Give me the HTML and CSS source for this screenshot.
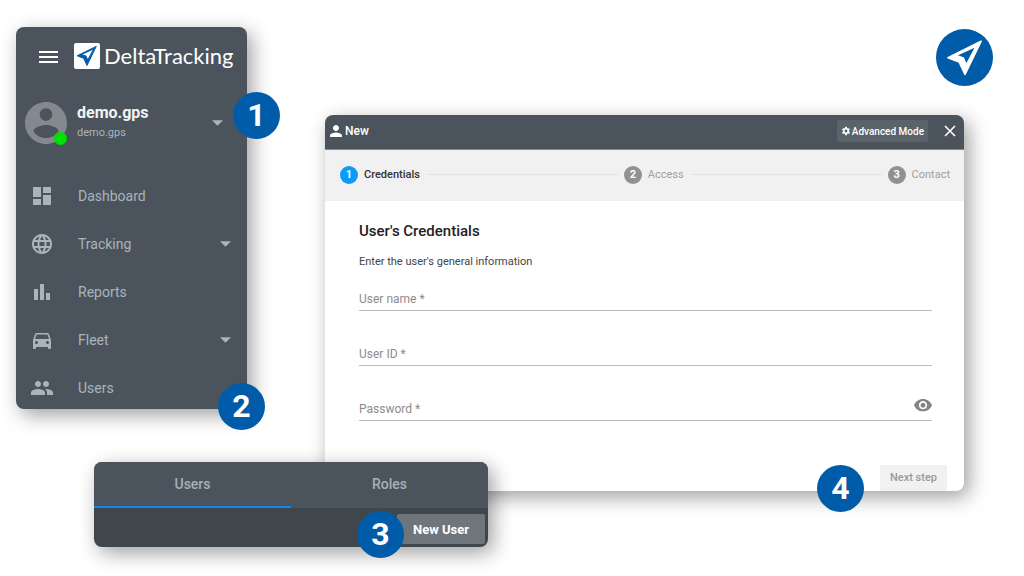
FILE: index.html
```html
<!DOCTYPE html>
<html lang="en">
<head>
  <meta charset="UTF-8">
  <meta name="viewport" content="width=device-width, initial-scale=1.0">
  <title>DeltaTracking - New user</title>
  <link rel="stylesheet" href="styles.css">
</head>
<body>
  <svg class="sprite" aria-hidden="true">
    <symbol id="arrow" viewBox="22 35 116 114">
      <path fill="currentColor" stroke="currentColor" stroke-width="5" stroke-linejoin="round" fill-rule="evenodd" d="M129 41 L28 91 L62 104 L80 142 Z M115 55 L84 113 L75 92 L51 84 Z"/>
    </symbol>
    <symbol id="caret" viewBox="0 0 10 5">
      <path fill="currentColor" d="M0 0h10L5 5z"/>
    </symbol>
  </svg>
  <main class="page">
    <aside class="sidebar card">
      <div class="sidebar-head">
        <button class="icon-btn" type="button" aria-label="Menu">
          <svg width="24" height="24" viewBox="0 0 24 24"><path fill="currentColor" d="M3 19h19v-2H3v2zm0-5h19v-2H3v2zm0-7v2h19V7H3z"/></svg>
        </button>
        <a class="brand" href="#">
          <span class="brand-mark"><svg width="22" height="22"><use href="#arrow"/></svg></span>
          <span class="brand-name">DeltaTracking</span>
        </a>
      </div>
      <div class="account">
        <div class="avatar">
          <svg width="42" height="42" viewBox="2 2 20 20"><path fill="currentColor" d="M12 2C6.480 2 2 6.480 2 12s4.480 10 10 10 10-4.480 10-10S17.520 2 12 2zm0 3c1.660 0 3 1.340 3 3s-1.340 3-3 3-3-1.340-3-3 1.340-3 3-3zm0 14.200c-2.500 0-4.710-1.280-6-3.220.030-1.990 4-3.080 6-3.080 1.990 0 5.970 1.090 6 3.080-1.290 1.940-3.500 3.220-6 3.220z"/></svg>
          <span class="status"></span>
        </div>
        <div class="account-text">
          <strong>demo.gps</strong>
          <span>demo.gps</span>
        </div>
        <button class="icon-btn account-toggle" type="button" aria-label="Account options">
          <svg class="caret"><use href="#caret"/></svg>
        </button>
      </div>
      <nav class="menu">
        <a href="#">
          <svg width="24" height="24" viewBox="0 0 24 24"><path fill="currentColor" d="M3 13h8V3H3v10zm0 8h8v-6H3v6zm10 0h8V11h-8v10zm0-18v6h8V3h-8z"/></svg>
          <span>Dashboard</span>
        </a>
        <a href="#">
          <svg width="24" height="24" viewBox="0 0 24 24"><path fill="currentColor" d="M11.990 2C6.470 2 2 6.480 2 12s4.470 10 9.990 10C17.520 22 22 17.520 22 12S17.520 2 11.990 2zm6.930 6h-2.950c-.320-1.250-.780-2.450-1.380-3.560 1.840.630 3.370 1.910 4.330 3.560zM12 4.040c.830 1.200 1.480 2.530 1.910 3.960h-3.820c.430-1.430 1.080-2.760 1.910-3.960zM4.260 14C4.100 13.360 4 12.690 4 12s.100-1.360.260-2h3.380c-.080.660-.140 1.320-.140 2 0 .680.060 1.340.140 2H4.260zm.820 2h2.950c.320 1.250.780 2.450 1.380 3.560-1.840-.630-3.370-1.900-4.330-3.560zm2.950-8H5.080c.960-1.660 2.490-2.930 4.330-3.560C8.810 5.550 8.350 6.750 8.030 8zM12 19.960c-.830-1.200-1.480-2.530-1.910-3.960h3.820c-.430 1.430-1.080 2.760-1.910 3.960zM14.340 14H9.660c-.090-.660-.160-1.320-.160-2 0-.680.070-1.350.160-2h4.680c.090.650.160 1.320.160 2 0 .680-.070 1.340-.160 2zm.250 5.560c.600-1.110 1.060-2.310 1.380-3.560h2.950c-.960 1.650-2.490 2.930-4.330 3.560zM16.360 14c.080-.660.140-1.320.140-2 0-.680-.060-1.340-.140-2h3.380c.160.640.260 1.310.260 2s-.100 1.360-.260 2h-3.380z"/></svg>
          <span>Tracking</span>
          <svg class="caret"><use href="#caret"/></svg>
        </a>
        <a href="#">
          <svg width="24" height="24" viewBox="0 0 24 24"><path fill="currentColor" d="M4 9h4v11H4zm12 4h4v7h-4zm-6-9h4v16h-4z"/></svg>
          <span>Reports</span>
        </a>
        <a href="#">
          <svg width="24" height="24" viewBox="0 0 24 24"><path fill="currentColor" d="M18.920 6.010C18.720 5.420 18.160 5 17.500 5h-11c-.660 0-1.210.420-1.420 1.010L3 12v8c0 .550.450 1 1 1h1c.550 0 1-.450 1-1v-1h12v1c0 .550.450 1 1 1h1c.550 0 1-.450 1-1v-8l-2.080-5.990zM6.500 16c-.830 0-1.500-.670-1.500-1.500S5.670 13 6.500 13s1.500.670 1.500 1.500S7.330 16 6.500 16zm11 0c-.830 0-1.500-.670-1.500-1.500s.670-1.500 1.500-1.500 1.500.670 1.500 1.500-.670 1.500-1.500 1.500zM5 11l1.500-4.500h11L19 11H5z"/></svg>
          <span>Fleet</span>
          <svg class="caret"><use href="#caret"/></svg>
        </a>
        <a href="#">
          <svg width="24" height="24" viewBox="0 0 24 24"><path fill="currentColor" d="M16 11c1.660 0 2.990-1.340 2.990-3S17.660 5 16 5c-1.660 0-3 1.340-3 3s1.340 3 3 3zm-8 0c1.660 0 2.990-1.340 2.990-3S9.660 5 8 5C6.340 5 5 6.340 5 8s1.340 3 3 3zm0 2c-2.330 0-7 1.170-7 3.500V19h14v-2.500c0-2.330-4.670-3.500-7-3.500zm8 0c-.290 0-.620.020-.970.050 1.160.840 1.970 1.970 1.970 3.450V19h6v-2.500c0-2.330-4.670-3.500-7-3.500z"/></svg>
          <span>Users</span>
        </a>
      </nav>
      <span class="badge badge-account">1</span>
      <span class="badge badge-users">2</span>
    </aside>

    <div class="emblem"><svg width="38" height="38"><use href="#arrow"/></svg></div>

    <section class="dialog card">
      <header class="dialog-head">
        <svg width="18" height="18" viewBox="0 0 24 24"><path fill="currentColor" d="M12 12c2.210 0 4-1.790 4-4s-1.790-4-4-4-4 1.790-4 4 1.790 4 4 4zm0 2c-2.670 0-8 1.340-8 4v2h16v-2c0-2.660-5.330-4-8-4z"/></svg>
        <h1>New</h1>
        <button class="advanced" type="button">
          <svg width="10" height="10" viewBox="0 0 24 24"><path fill="currentColor" fill-rule="evenodd" d="M10 2h4l.600 3 2 1.100 2.800-1 2 3.500L19.200 10.600v2.800l2.200 2-2 3.500-2.800-1-2 1.100-.600 3h-4l-.600-3-2-1.100-2.800 1-2-3.500 2.200-2v-2.800l-2.200-2 2-3.500 2.800 1 2-1.100zM12 8.500a3.500 3.500 0 1 0 0 7 3.500 3.500 0 0 0 0-7z"/></svg>
          Advanced Mode
        </button>
        <button class="icon-btn" type="button" aria-label="Close">
          <svg width="12" height="12" viewBox="0 0 12 12"><path fill="none" stroke="currentColor" stroke-width="1.600" d="M1 1l10 10M11 1L1 11"/></svg>
        </button>
      </header>
      <ol class="steps">
        <li class="step active"><span class="step-no">1</span>Credentials</li>
        <li class="step"><span class="step-no">2</span>Access</li>
        <li class="step"><span class="step-no">3</span>Contact</li>
      </ol>
      <form class="form">
        <h2>User's Credentials</h2>
        <p>Enter the user's general information</p>
        <div class="field">
          <label for="user-name">User name *</label>
          <input id="user-name" type="text" required>
        </div>
        <div class="field">
          <label for="user-id">User ID *</label>
          <input id="user-id" type="text" required>
        </div>
        <div class="field">
          <label for="password">Password *</label>
          <input id="password" type="password" required>
          <button class="icon-btn reveal" type="button" aria-label="Show password">
            <svg width="18" height="18" viewBox="1 2 22 22"><path fill="currentColor" d="M12 4.500C7 4.500 2.730 7.610 1 12c1.730 4.390 6 7.500 11 7.500s9.270-3.110 11-7.500c-1.730-4.390-6-7.500-11-7.500zM12 17c-2.760 0-5-2.240-5-5s2.240-5 5-5 5 2.240 5 5-2.240 5-5 5zm0-8c-1.660 0-3 1.340-3 3s1.340 3 3 3 3-1.340 3-3-1.340-3-3-3z"/></svg>
          </button>
        </div>
      </form>
      <footer class="dialog-foot">
        <button class="next" type="button" disabled>Next step</button>
      </footer>
      <span class="badge badge-next">4</span>
    </section>

    <section class="tabs card">
      <div class="tab-list" role="tablist">
        <button class="tab selected" type="button" role="tab" aria-selected="true">Users</button>
        <button class="tab" type="button" role="tab" aria-selected="false">Roles</button>
      </div>
      <div class="toolbar">
        <button class="new-user" type="button">New User</button>
      </div>
      <span class="badge badge-new">3</span>
    </section>
  </main>
</body>
</html>
```
FILE: styles.css
```css
* {
  box-sizing: border-box;
}
body {
  margin: 0;
  background-color: #fff;
  font-family: Roboto, "Liberation Sans", sans-serif;
}
button {
  border: 0;
  padding: 0;
  font-family: inherit;
  color: inherit;
  background: none;
}
a {
  color: inherit;
  text-decoration: none;
}
svg {
  display: block;
  flex: none;
}
h1, h2, p, ol {
  margin: 0;
  padding: 0;
}
.sprite {
  position: absolute;
  width: 0;
  height: 0;
}

/* the tabs card slides under the dialog's bottom edge */
.page {
  display: grid;
  grid-template-columns: 231px 1fr;
  grid-template-rows: 88px auto auto;
  column-gap: 78px;
  padding: 27px 60px 28px 16px;
}
.card {
  position: relative;
  border-radius: 8px;
  box-shadow: 5px 6px 20px rgba(0, 0, 0, 0.38);
}
.icon-btn {
  display: flex;
}
.caret {
  width: 11px;
  height: 6px;
}

.badge {
  position: absolute;
  width: 47px;
  height: 47px;
  border-radius: 50%;
  background-color: #005ca8;
  color: #fff;
  font-size: 32px;
  font-weight: 700;
  line-height: 47px;
  text-align: center;
}
.badge-account {
  top: 65px;
  right: -33px;
}
.badge-users {
  right: -18px;
  bottom: -21px;
}
.badge-next {
  right: 100px;
  bottom: -21px;
}
.badge-new {
  right: 84px;
  bottom: -11px;
}

.sidebar {
  grid-row: 1 / 3;
  align-self: start;
  background-color: #4b545c;
  color: #a9b4bd;
}
.sidebar-head {
  display: flex;
  align-items: center;
  gap: 14px;
  height: 58px;
  padding-left: 20px;
  color: #fff;
}
.brand {
  display: flex;
  align-items: center;
  gap: 4px;
}
.brand-mark {
  display: grid;
  place-items: center;
  width: 26px;
  height: 26px;
  border-radius: 2px;
  background-color: #fff;
  color: #005ca8;
}
.brand-name {
  font-family: Lato, sans-serif;
  font-size: 22px;
  line-height: 26px;
}
.account {
  display: flex;
  align-items: center;
  gap: 10px;
  height: 74px;
  padding: 2px 24px 0 9px;
}
.avatar {
  position: relative;
  color: #83898e;
}
.status {
  position: absolute;
  right: 0;
  bottom: -1px;
  width: 13px;
  height: 13px;
  border-radius: 50%;
  background-color: #00e000;
}
.account-text {
  display: flex;
  flex-direction: column;
  flex: 1;
  line-height: 20px;
}
.account-text strong {
  color: #f1f3f4;
  font-size: 16px;
}
.account-text span {
  font-size: 11px;
}
.menu {
  margin: 13px 0 -3px;
}
.menu a {
  display: flex;
  align-items: center;
  gap: 24px;
  height: 48px;
  padding: 0 16px 0 14px;
  font-size: 14px;
}
.menu .caret {
  margin-left: auto;
}

.emblem {
  display: grid;
  place-items: center;
  grid-column: 2;
  justify-self: end;
  width: 57px;
  height: 57px;
  margin: 2px -29px 0 0;
  border-radius: 50%;
  background-color: #005ca8;
  color: #fff;
}

.dialog {
  grid-column: 2;
  background-color: #fff;
}
.dialog-head {
  display: flex;
  align-items: center;
  height: 35px;
  padding: 0 8px 2px 2px;
  border-bottom: 1px solid #85898c;
  border-radius: 8px 8px 0 0;
  background-color: #4b545c;
  color: #fff;
}
.dialog-head h1 {
  margin-right: auto;
  font-size: 12px;
  font-weight: 500;
}
.advanced {
  display: flex;
  align-items: center;
  gap: 1px;
  height: 22px;
  margin-right: 16px;
  padding: 0 4px;
  border-radius: 2px;
  background-color: #5a636a;
  font-size: 10px;
  font-weight: 500;
}
.steps {
  display: flex;
  align-items: center;
  height: 51px;
  padding: 0 14px 2px 15px;
  background-color: #f1f1f1;
  list-style: none;
}
.step {
  display: flex;
  align-items: center;
  gap: 6px;
  color: #a0a0a0;
  font-size: 11px;
}
.step:not(:last-child) {
  flex: auto;
}
.step:not(:last-child)::after {
  content: "";
  flex: 1;
  height: 1px;
  margin: 0 6px 0 2px;
  background-color: #e2e2e2;
}
.step-no {
  width: 18px;
  border-radius: 50%;
  background-color: #919191;
  color: #fff;
  font-weight: 700;
  line-height: 18px;
  text-align: center;
}
.step.active {
  color: #333;
  font-weight: 500;
}
.active .step-no {
  background-color: #0c9bf8;
}
.form {
  padding: 20px 32px 0 34px;
}
.form h2 {
  color: #222;
  font-size: 15px;
  font-weight: 500;
  line-height: 20px;
}
.form p {
  margin-top: 12px;
  color: #444;
  font-size: 11px;
  line-height: 18px;
}
.field {
  display: grid;
  height: 24px;
  margin-top: 31px;
  border-bottom: 1px solid #bbb;
}
.form p + .field {
  margin-top: 16px;
}
.field > * {
  grid-area: 1 / 1;
}
.field label {
  color: #8c8c8c;
  font-size: 12px;
  line-height: 24px;
}
.field input {
  width: 100%;
  border: 0;
  padding: 0;
  outline: 0;
  background: none;
  font: inherit;
}
.reveal {
  justify-self: end;
  color: #858585;
}
.dialog-foot {
  display: flex;
  justify-content: flex-end;
  padding: 44px 17px 0;
}
.next {
  padding: 0 10px;
  background-color: #f1f1f1;
  color: #999;
  font-size: 11px;
  font-weight: 500;
  line-height: 26px;
}

.tabs {
  grid-column: 1 / 3;
  width: 394px;
  margin: -29px 0 0 78px;
  background-color: #3f474d;
}
.tab-list {
  display: flex;
  border-radius: 8px 8px 0 0;
  background-color: #4b545c;
}
.tab {
  flex: 1;
  height: 46px;
  border-bottom: 2px solid transparent;
  color: #a9b0b6;
  font-size: 14px;
  font-weight: 500;
}
.tab.selected {
  border-color: #0b87f0;
}
.toolbar {
  display: flex;
  justify-content: flex-end;
  padding: 6px 3px 3px;
}
.new-user {
  height: 30px;
  padding: 0 16px;
  border-radius: 2px;
  background-color: #6e757b;
  color: #fff;
  font-size: 13px;
  font-weight: 700;
}
```
